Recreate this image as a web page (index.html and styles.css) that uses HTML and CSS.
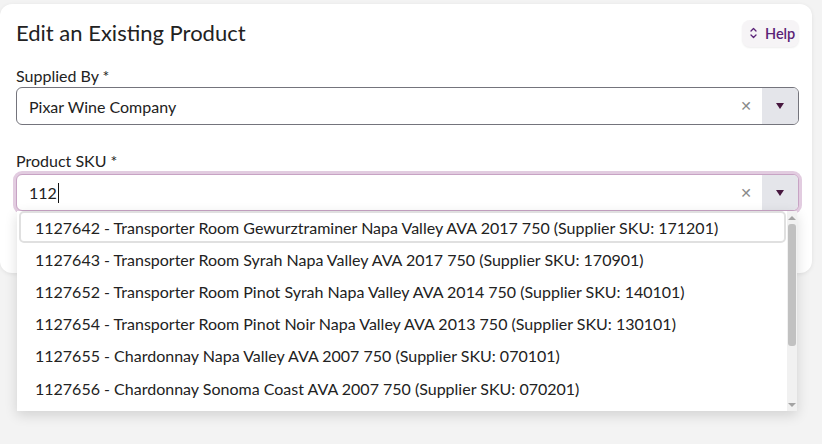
FILE: index.html
```html
<!DOCTYPE html>
<html lang="en">
<head>
<meta charset="utf-8">
<title>Edit an Existing Product</title>
<link rel="stylesheet" href="styles.css">
</head>
<body>
<div class="page">
<div class="card">
  <div class="header">
    <h1 class="title">Edit an Existing Product</h1>
    <button class="help">
      <svg class="help-icon" width="7" height="12" viewBox="0 0 7 12"><path d="M1 4 L3.5 1.5 L6 4 M1 8 L3.5 10.5 L6 8" fill="none" stroke="currentColor" stroke-width="1.3" stroke-linecap="round" stroke-linejoin="round"/></svg>
      <span>Help</span>
    </button>
  </div>

  <div class="field">
    <label class="label">Supplied By *</label>
    <div class="select">
      <div class="value">Pixar Wine Company</div>
      <div class="clear">&#x2715;</div>
      <div class="toggle"><span class="tri"></span></div>
    </div>
  </div>

  <div class="field field-sku">
    <label class="label">Product SKU *</label>
    <div class="select focused">
      <div class="value">112<span class="caret"></span></div>
      <div class="clear">&#x2715;</div>
      <div class="toggle"><span class="tri"></span></div>
    </div>
    <div class="menu">
      <div class="options">
        <div class="opt active">1127642 - Transporter Room Gewurztraminer Napa Valley AVA 2017 750 (Supplier SKU: 171201)</div>
        <div class="opt">1127643 - Transporter Room Syrah Napa Valley AVA 2017 750 (Supplier SKU: 170901)</div>
        <div class="opt">1127652 - Transporter Room Pinot Syrah Napa Valley AVA 2014 750 (Supplier SKU: 140101)</div>
        <div class="opt">1127654 - Transporter Room Pinot Noir Napa Valley AVA 2013 750 (Supplier SKU: 130101)</div>
        <div class="opt">1127655 - Chardonnay Napa Valley AVA 2007 750 (Supplier SKU: 070101)</div>
        <div class="opt">1127656 - Chardonnay Sonoma Coast AVA 2007 750 (Supplier SKU: 070201)</div>
      </div>
      <div class="scrollbar">
        <span class="arrow up"></span>
        <div class="track"><div class="thumb"></div></div>
        <span class="arrow down"></span>
      </div>
    </div>
  </div>
</div>
</div>
</body>
</html>
```

FILE: styles.css
```css
* { box-sizing: border-box; }

html, body {
  margin: 0;
  padding: 0;
  background: #f3f3f3;
  font-family: "Lato", "Noto Sans", sans-serif;
  color: #222;
}

.page {
  min-height: 444px;
  padding-top: 4px;
}

.card {
  width: 812px;
  height: 269px;
  background: #fff;
  border-radius: 12px;
  box-shadow: 0 1px 4px rgba(0, 0, 0, 0.08);
  padding: 15px 13px 0 16px;
}

.header {
  display: flex;
  justify-content: space-between;
  align-items: center;
  height: 28px;
}

.title {
  margin: 0;
  font-size: 22px;
  font-weight: 400;
  color: #222;
  line-height: 26px;
}

.help {
  display: flex;
  align-items: center;
  gap: 8px;
  height: 27px;
  width: 57px;
  padding: 0 0 0 8px;
  border: none;
  border-radius: 8px;
  background: #f6f4f6;
  box-shadow: 0 1px 2px rgba(0, 0, 0, 0.07);
  color: #5a2277;
  font-family: inherit;
  font-size: 14.5px;
  font-weight: 600;
}

.help-icon { display: block; }

.field { margin-top: 20px; position: relative; }
.field-sku { margin-top: 27px; }

.label {
  display: block;
  font-size: 16px;
  line-height: 18px;
  margin-bottom: 2px;
}

.field-sku .label { margin-bottom: 4px; }

.select {
  display: flex;
  align-items: stretch;
  height: 38px;
  border: 1px solid #74747c;
  border-radius: 6px;
  background: #fff;
}

.select.focused {
  height: 37px;
  border-color: #c7a3c4;
  box-shadow: 0 0 0 3px #e2cce0;
}

.value {
  flex: 1;
  display: flex;
  align-items: center;
  padding-left: 12px;
  font-size: 16px;
}

.caret {
  display: inline-block;
  width: 1px;
  height: 20px;
  background: #111;
  margin-left: 1px;
}

.clear {
  width: 32px;
  display: flex;
  align-items: center;
  justify-content: center;
  color: #8a8a8a;
  font-size: 14px;
  font-family: "DejaVu Sans", sans-serif;
}

.toggle {
  width: 36px;
  display: flex;
  align-items: center;
  justify-content: center;
  background: #e4e5ea;
  border-radius: 0 5px 5px 0;
}

.tri {
  width: 0;
  height: 0;
  border-left: 4.5px solid transparent;
  border-right: 4.5px solid transparent;
  border-top: 6px solid #47173f;
}

.menu {
  position: absolute;
  z-index: 10;
  left: 1px;
  top: 59px;
  width: 780px;
  height: 200px;
  background: #fff;
  box-shadow: 0 4px 12px rgba(0, 0, 0, 0.14);
  display: flex;
  overflow: hidden;
}

.options {
  flex: 1;
  overflow: hidden;
}

.opt {
  height: 32.2px;
  display: flex;
  align-items: center;
  margin: 0 1px 0 2px;
  padding-left: 14px;
  border: 2px solid transparent;
  border-radius: 5px;
  font-size: 16px;
  white-space: nowrap;
  color: #222;
}

.opt.active { border-color: #e0e0e0; }

.scrollbar {
  width: 10px;
  background: #f1f1f1;
  display: flex;
  flex-direction: column;
  align-items: center;
}

.arrow {
  width: 0;
  height: 0;
  border-left: 4px solid transparent;
  border-right: 4px solid transparent;
}
.arrow.up { border-bottom: 4px solid #a3a3a3; margin-top: 5px; }
.arrow.down { border-top: 4px solid #a3a3a3; margin-bottom: 4px; }

.track {
  flex: 1;
  width: 100%;
  padding: 4px 1px 0;
}

.thumb {
  height: 122px;
  background: #c1c1c1;
  border-radius: 3px;
}
```
